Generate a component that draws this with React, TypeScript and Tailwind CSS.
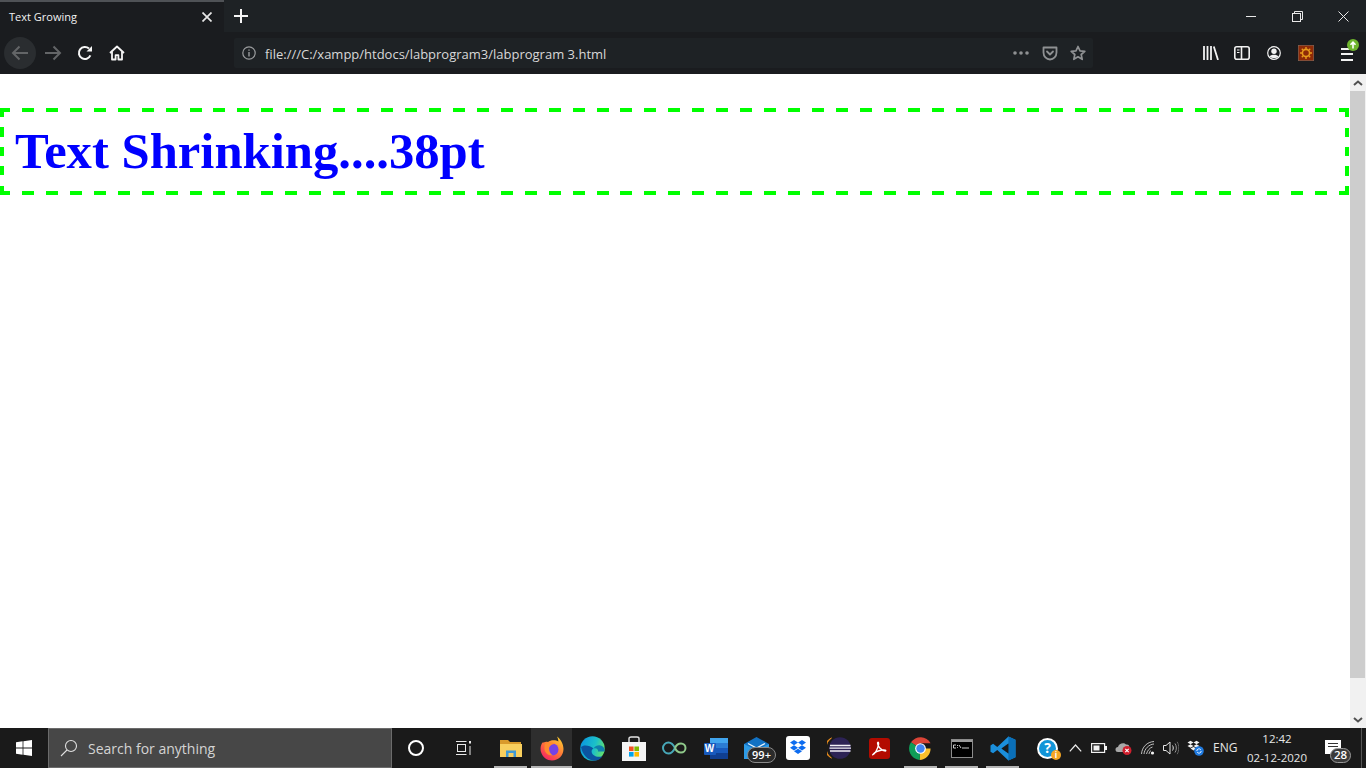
import React from 'react';

const uiFont = "font-['Open_Sans','Noto_Sans',sans-serif]";

function WindowControls() {
  return (
    <div className="ml-auto flex h-8 items-center">
      <div className="flex h-8 w-[46px] items-center justify-center">
        <div className="h-px w-[10px] bg-[#e8e8e8]" />
      </div>
      <div className="flex h-8 w-[46px] items-center justify-center">
        <svg width="11" height="11" viewBox="0 0 11 11" fill="none" stroke="#e8e8e8" strokeWidth="1">
          <rect x="0.5" y="2.5" width="8" height="8" />
          <path d="M2.5 2.5V0.5H10.5V8.5H8.5" />
        </svg>
      </div>
      <div className="flex h-8 w-[46px] items-center justify-center">
        <svg width="11" height="11" viewBox="0 0 11 11" fill="none" stroke="#e8e8e8" strokeWidth="1">
          <path d="M0.5 0.5L10.5 10.5M10.5 0.5L0.5 10.5" />
        </svg>
      </div>
    </div>
  );
}

function TabStrip() {
  return (
    <div className="flex h-8 bg-[#1e2225]">
      <div className="flex h-8 w-[224px] items-center border-t-2 border-[#4f5256] bg-[#1a1c1f] pl-[9px] pr-3">
        <span className={`${uiFont} pt-px text-[11px] text-[#f2f2f2]`}>Text Growing</span>
        <svg className="ml-auto" width="10" height="10" viewBox="0 0 10 10" stroke="#e6e6e6" strokeWidth="1.7">
          <path d="M0.5 0.5L9.5 9.5M9.5 0.5L0.5 9.5" />
        </svg>
      </div>
      <div className="flex h-8 w-[34px] items-center justify-center">
        <svg width="14" height="14" viewBox="0 0 14 14" stroke="#f5f5f5" strokeWidth="2">
          <path d="M7 0V14M0 7H14" />
        </svg>
      </div>
      <WindowControls />
    </div>
  );
}

function NavBar() {
  return (
    <div className="flex h-[42px] items-center bg-[#1a1c1f] pl-1">
      <div className="flex h-8 w-8 items-center justify-center rounded-full bg-[#2a2d30]">
        <svg width="18" height="16" viewBox="0 0 18 16" fill="none" stroke="#636567" strokeWidth="2">
          <path d="M17 8H2M8.5 1.5L2 8L8.5 14.5" />
        </svg>
      </div>
      <div className="flex h-8 w-[34px] items-center justify-center">
        <svg width="18" height="16" viewBox="0 0 18 16" fill="none" stroke="#636567" strokeWidth="2">
          <path d="M1 8H16M9.5 1.5L16 8L9.5 14.5" />
        </svg>
      </div>
      <div className="flex h-8 w-[30px] items-center justify-center">
        <svg width="16" height="16" viewBox="0 0 16 16" fill="none" stroke="#f5f5f5" strokeWidth="2">
          <path d="M13.4 10.4A6 6 0 1 1 12 3.6" />
          <path d="M15 1V6.5H9.5Z" fill="#f5f5f5" stroke="none" />
        </svg>
      </div>
      <div className="flex h-8 w-[34px] items-center justify-center">
        <svg width="16" height="16" viewBox="0 0 16 16" fill="none" stroke="#f5f5f5" strokeWidth="1.8" strokeLinejoin="round">
          <path d="M1 8L8 1.5L15 8" />
          <path d="M3 6.5V14.5H6.6V10.2H9.4V14.5H13V6.5" />
        </svg>
      </div>
      <UrlBar />
      <div className="ml-[110px] flex items-center">
        <ToolbarIcons />
      </div>
    </div>
  );
}

function UrlBar() {
  return (
    <div className="ml-[100px] flex h-[30px] w-[859px] items-center rounded-[2px] bg-[#1e2225] pl-[8px]">
      <svg width="14" height="14" viewBox="0 0 14 14" fill="none" stroke="#9a9c9e" strokeWidth="1.2">
        <circle cx="7" cy="7" r="6.2" />
        <path d="M7 6V10.5M7 3.4V4.8" strokeWidth="1.4" />
      </svg>
      <span className={`${uiFont} ml-[9px] pt-[4px] text-[13px] text-[#d8d8d8]`}>
        file:///C:/xampp/htdocs/labprogram3/labprogram 3.html
      </span>
      <div className="ml-auto flex items-center pr-[7px]">
        <svg width="16" height="4" viewBox="0 0 16 4" fill="#8f9193">
          <circle cx="2" cy="2" r="1.8" />
          <circle cx="8" cy="2" r="1.8" />
          <circle cx="14" cy="2" r="1.8" />
        </svg>
        <svg className="ml-[13px]" width="16" height="15" viewBox="0 0 16 15" fill="none" stroke="#8f9193" strokeWidth="1.8" strokeLinejoin="round" strokeLinecap="round">
          <path d="M1.5 1.5H14.5V6.5A6.5 7 0 0 1 1.5 6.5Z" />
          <path d="M5 5.5L8 8.5L11 5.5" />
        </svg>
        <svg className="ml-[12px]" width="16" height="16" viewBox="0 0 16 16" fill="none" stroke="#8f9193" strokeWidth="1.7" strokeLinejoin="round">
          <path d="M8 1.5L10 5.8L14.8 6.3L11.2 9.5L12.2 14.3L8 11.8L3.8 14.3L4.8 9.5L1.2 6.3L6 5.8Z" />
        </svg>
      </div>
    </div>
  );
}

function ToolbarIcons() {
  return (
    <>
      <svg width="16" height="14" viewBox="0 0 16 14" fill="none" stroke="#f2f2f2" strokeWidth="1.8">
        <path d="M1 0V14M4.5 0V14M8 0V14M10.8 0.5L15 14" />
      </svg>
      <svg className="ml-[15px]" width="16" height="14" viewBox="0 0 16 14" fill="none" stroke="#f2f2f2" strokeWidth="1.6">
        <rect x="0.8" y="0.8" width="14.4" height="12.4" rx="2" />
        <path d="M7.5 1V13" />
        <path d="M3 4H5.5M3 6.5H5.5" strokeWidth="1.2" />
      </svg>
      <svg className="ml-[17px]" width="14" height="14" viewBox="0 0 14 14" fill="none" stroke="#f2f2f2" strokeWidth="1.2">
        <circle cx="7" cy="7" r="6.3" />
        <circle cx="7" cy="5.3" r="2.7" fill="#f2f2f2" stroke="none" />
        <path d="M2.6 10.5C4 8.2 10 8.2 11.4 10.5C10 12.5 4 12.5 2.6 10.5Z" fill="#f2f2f2" stroke="none" />
      </svg>
      <svg className="ml-[17px]" width="16" height="16" viewBox="0 0 16 16">
        <rect width="16" height="16" fill="#8e2a07" stroke="#77706a" strokeWidth="1" />
        <circle cx="8" cy="8" r="3.6" fill="none" stroke="#e89a1c" strokeWidth="1.6" />
        <path d="M8 2V4M8 12V14M2 8H4M12 8H14M3.8 3.8L5.2 5.2M10.8 10.8L12.2 12.2M12.2 3.8L10.8 5.2M5.2 10.8L3.8 12.2" stroke="#e89a1c" strokeWidth="1.4" />
      </svg>
      <div className="relative ml-[27px] flex h-[13px] w-3 translate-y-[1px] flex-col justify-between">
        <div className="h-[2px] w-3 bg-[#f2f2f2]" />
        <div className="h-[2px] w-3 bg-[#f2f2f2]" />
        <div className="h-[2px] w-3 bg-[#f2f2f2]" />
        <svg className="absolute left-[6px] top-[-9px]" width="12" height="12" viewBox="0 0 12 12">
          <circle cx="6" cy="6" r="6" fill="#6fb52e" />
          <path d="M6 9.5V3.5M3.5 5.8L6 3.2L8.5 5.8" fill="none" stroke="#fff" strokeWidth="1.6" />
        </svg>
      </div>
    </>
  );
}

function Page() {
  return (
    <div className="flex min-h-0 flex-1 bg-white">
      <div className="flex-1 pt-[34px]">
        <div className="h-[87px] w-[1349px] bg-no-repeat pl-[15px] pt-[14px] [background-image:repeating-linear-gradient(90deg,#00ff00_0_10px,transparent_10px_21.94px,#00ff00_21.94px_23.94px),repeating-linear-gradient(90deg,#00ff00_0_10px,transparent_10px_21.94px,#00ff00_21.94px_23.94px),repeating-linear-gradient(0deg,#00ff00_0_9px,transparent_9px_19.5px),repeating-linear-gradient(180deg,#00ff00_0_9px,transparent_9px_19.5px)] [background-position:0_0,0_100%,0_0,100%_0] [background-size:100%_4px,100%_4px,4px_100%,4px_100%]">
          <h1 className="font-['Liberation_Serif',serif] text-[50.67px] font-bold leading-[58px] text-[#0000ff]">
            Text Shrinking....38pt
          </h1>
        </div>
      </div>
      <Scrollbar />
    </div>
  );
}

function Scrollbar() {
  return (
    <div className="flex w-4 flex-col bg-[#f1f1f1]">
      <div className="flex h-[17px] items-center justify-center">
        <svg width="10" height="6" viewBox="0 0 10 6" fill="none" stroke="#505050" strokeWidth="2">
          <path d="M1 5L5 1.5L9 5" />
        </svg>
      </div>
      <div className="mr-px h-[587px] bg-[#cdcdcd]" />
      <div className="mt-auto flex h-[17px] items-center justify-center">
        <svg width="10" height="6" viewBox="0 0 10 6" fill="none" stroke="#505050" strokeWidth="2">
          <path d="M1 1L5 4.5L9 1" />
        </svg>
      </div>
    </div>
  );
}

function TaskIcon({ children, running, active }: { children: React.ReactNode; running?: boolean; active?: boolean }) {
  return (
    <div className={`relative flex h-10 w-[41px] items-center justify-center ${active ? 'bg-[#2e2e2e]' : ''}`}>
      {children}
      {running && <div className={`absolute bottom-0 h-[2px] bg-[#b5b5b5] ${active ? 'inset-x-0' : 'inset-x-[4px]'}`} />}
    </div>
  );
}

function Taskbar() {
  return (
    <div className={`${uiFont} flex h-10 items-center bg-[#1a1a1a]`}>
      <div className="flex h-10 w-12 items-center justify-center">
        <svg width="16" height="16" viewBox="0 0 16 16" fill="#fff">
          <path d="M0 2.3L6.6 1.3V7.6H0ZM7.4 1.2L16 0V7.6H7.4ZM0 8.4H6.6V14.7L0 13.7ZM7.4 8.4H16V16L7.4 14.8Z" />
        </svg>
      </div>
      <div className="flex h-10 w-[344px] items-center border border-[#6b6b6b] bg-[#474747] pl-[11px]">
        <svg width="18" height="18" viewBox="0 0 18 18" fill="none" stroke="#e0e0e0" strokeWidth="1.1">
          <circle cx="11" cy="7" r="5.5" />
          <path d="M7 11L1 17" />
        </svg>
        <span className="ml-[10px] text-[14px] text-[#d4d4d4]">Search for anything</span>
      </div>
      <div className="flex h-10 w-12 items-center justify-center">
        <div className="h-4 w-4 rounded-full border-2 border-white" />
      </div>
      <div className="flex h-10 w-12 items-center justify-center">
        <svg width="16" height="16" viewBox="0 0 16 16" fill="none" stroke="#e8e8e8" strokeWidth="1">
          <path d="M0 1.5H10.5M0 14.5H10.5" />
          <rect x="1.5" y="4.5" width="8" height="7" />
          <path d="M14 1V3.5" strokeWidth="2" />
          <path d="M14 6V15" />
        </svg>
      </div>
      <div className="w-[2px]" />
      <TaskIcon running><ExplorerIcon /></TaskIcon>
      <TaskIcon running active><FirefoxIcon /></TaskIcon>
      <TaskIcon><EdgeIcon /></TaskIcon>
      <TaskIcon><StoreIcon /></TaskIcon>
      <TaskIcon><InfinityIcon /></TaskIcon>
      <TaskIcon><WordIcon /></TaskIcon>
      <TaskIcon><MailIcon /></TaskIcon>
      <TaskIcon><DropboxIcon /></TaskIcon>
      <TaskIcon><EclipseIcon /></TaskIcon>
      <TaskIcon><AcrobatIcon /></TaskIcon>
      <TaskIcon running><ChromeIcon /></TaskIcon>
      <TaskIcon running><CmdIcon /></TaskIcon>
      <TaskIcon running><VsCodeIcon /></TaskIcon>
      <Tray />
    </div>
  );
}

function Tray() {
  return (
    <div className="ml-[13px] flex h-10 flex-1 items-center">
      <div className="flex w-[27px] justify-start pl-px"><HelpIcon /></div>
      <div className="flex w-6 justify-center">
        <svg width="13" height="8" viewBox="0 0 13 8" fill="none" stroke="#ececec" strokeWidth="1.2">
          <path d="M0.8 7.3L6.5 1L12.2 7.3" />
        </svg>
      </div>
      <div className="flex w-6 justify-center">
        <svg width="16" height="10" viewBox="0 0 16 10">
          <rect x="0.6" y="0.6" width="13" height="8.8" fill="none" stroke="#f2f2f2" strokeWidth="1.2" />
          <rect x="2.5" y="2.5" width="6" height="5" fill="#f2f2f2" />
          <rect x="14" y="3" width="2" height="4" fill="#f2f2f2" />
        </svg>
      </div>
      <div className="flex w-6 justify-center">
        <svg width="17" height="14" viewBox="0 0 17 14">
          <path d="M3 11A2.5 2.5 0 0 1 3 6C3.5 2.5 9 1 11 3.5C13.5 3 15 5 14 7L10 11Z" fill="#a8a8a8" />
          <circle cx="12" cy="9.5" r="4.5" fill="#d0202e" />
          <path d="M10.3 7.8L13.7 11.2M13.7 7.8L10.3 11.2" stroke="#fff" strokeWidth="1.1" />
        </svg>
      </div>
      <div className="flex w-6 justify-center pl-px">
        <svg width="14" height="14" viewBox="0 0 14 14" fill="none" stroke="#d0d0d0" strokeWidth="0.9">
          <path d="M0.5 13C1 6 6 1 13 0.5" />
          <path d="M3 13C3.3 8 8 3.3 13 3" />
          <path d="M5.5 13C6 10 9 6.5 11.5 6" />
          <path d="M8 13C8.2 11.5 9 10 10 9.5" />
          <circle cx="11.5" cy="12" r="1.6" fill="#f2f2f2" stroke="none" />
        </svg>
      </div>
      <div className="flex w-6 justify-center">
        <svg width="16" height="14" viewBox="0 0 16 14" fill="none" stroke="#e6e6e6" strokeWidth="1">
          <path d="M0.5 4.5H3L7 1V13L3 9.5H0.5Z" />
          <path d="M9.5 4.5C10.5 6 10.5 8 9.5 9.5" />
          <path d="M12 2.5C13.8 5 13.8 9 12 11.5" stroke="#999" />
          <path d="M14.2 0.8C16.3 4.5 16.3 9.5 14.2 13.2" stroke="#666" />
        </svg>
      </div>
      <div className="flex w-6 justify-center">
        <svg width="17" height="16" viewBox="0 0 17 16">
          <path d="M0.5 2.5L3.5 0.8L6.5 2.5L3.5 4.3ZM6.5 2.5L9.5 0.8L12.5 2.5L9.5 4.3ZM0.5 6L3.5 4.3L6.5 6L3.5 7.8ZM6.5 6L9.5 4.3L12.5 6L9.5 7.8ZM3.5 8.6L6.5 7L9.5 8.6L6.5 10.4Z" fill="#f2f2f2" />
          <circle cx="12" cy="11" r="4.8" fill="#1f7ae0" />
          <path d="M9.8 11A2.2 2.2 0 0 1 13.8 9.8M14.2 11A2.2 2.2 0 0 1 10.2 12.2" fill="none" stroke="#fff" strokeWidth="0.9" />
        </svg>
      </div>
      <span className="ml-[6px] w-[27px] text-[12px] text-[#e6e6e6]">ENG</span>
      <div className="ml-[4px] w-[66px] text-center text-[11.5px] leading-[19px] text-[#e6e6e6]">
        <div>12:42</div>
        <div>02-12-2020</div>
      </div>
      <div className="relative ml-[15px] mt-[-3px] h-[14px] w-4 bg-white">
        <div className="mx-[3px] mt-[3px] h-px bg-[#333]" />
        <div className="mx-[3px] mt-[2px] h-px bg-[#333]" />
        <div className="absolute left-[5px] top-[8px] flex h-[15px] w-[21px] items-center justify-center rounded-full border border-[#9a9a9a] bg-[#3a3a3a] text-[11.5px] font-semibold text-white">
          28
        </div>
      </div>
      <div className="ml-auto mr-[4px] h-10 w-px bg-[#555]" />
    </div>
  );
}

function ExplorerIcon() {
  return (
    <svg width="22" height="20" viewBox="0 0 22 20">
      <path d="M0 2H8L10 4H21V7H0Z" fill="#d99a2b" />
      <rect y="6" width="22" height="13" fill="#f8cf5e" />
      <path d="M6 19V12.5H16V19H13.5V15H8.5V19Z" fill="#3f9ad6" />
    </svg>
  );
}

function FirefoxIcon() {
  return (
    <svg width="24" height="25" viewBox="0 0 24 25">
      <defs>
        <linearGradient id="ffa" x1="0.8" y1="0" x2="0.1" y2="1">
          <stop offset="0" stopColor="#ffcf2e" />
          <stop offset="0.5" stopColor="#ff7139" />
          <stop offset="1" stopColor="#f5156c" />
        </linearGradient>
      </defs>
      <path d="M17 0.5C18.5 3 18 4.5 18.5 5.5C16 4 11 3.5 8 6C5 5 3.5 7 2.5 6.5C0 10 0.5 14 1 16C2.5 21 7 24.5 12 24.5C18.5 24.5 23.5 19.5 23.5 13C23.5 8 20.5 3 17 0.5Z" fill="url(#ffa)" />
      <circle cx="12.5" cy="13.5" r="6" fill="#7542e5" />
      <path d="M5 8C8.5 5.5 13 5.5 15 8C12 8 10 9.5 9 12C9 15 10 17.5 13 19.5C8 20 4 16 4.5 12C4.5 10.5 4.5 9 5 8Z" fill="#ff8a2e" />
    </svg>
  );
}

function EdgeIcon() {
  return (
    <svg width="25" height="25" viewBox="0 0 25 25">
      <defs>
        <linearGradient id="ega" x1="0" y1="0.2" x2="1" y2="0.5">
          <stop offset="0" stopColor="#0a96e0" />
          <stop offset="0.6" stopColor="#1cc0c8" />
          <stop offset="1" stopColor="#62e070" />
        </linearGradient>
      </defs>
      <circle cx="12.5" cy="12.5" r="12.2" fill="url(#ega)" />
      <path d="M1 11C2.5 19 8 24.5 14.5 24.7C18.5 24.5 21 22.5 22.5 20C19.5 21.5 16 21 13.5 19C11 17 11 13.5 13.5 12.5C10 9 3 8.5 1 11Z" fill="#0b54a0" />
      <path d="M13.5 12.5C16 11.5 18.5 13 18 15.5H24.5C25 13 24 11 22 10C19 8.5 15.5 9.5 13.5 12.5Z" fill="#0f7fae" />
    </svg>
  );
}

function StoreIcon() {
  return (
    <svg width="24" height="25" viewBox="0 0 24 25">
      <path d="M7 7V2.5C7 1.5 8 1 9 1H15C16 1 17 1.5 17 2.5V7" fill="none" stroke="#e4e4e4" strokeWidth="1.4" />
      <rect y="6" width="24" height="19" fill="#f5f5f5" />
      <rect x="7" y="10.5" width="4.6" height="4.6" fill="#f25022" />
      <rect x="12.4" y="10.5" width="4.6" height="4.6" fill="#7fba00" />
      <rect x="7" y="16" width="4.6" height="4.6" fill="#00a4ef" />
      <rect x="12.4" y="16" width="4.6" height="4.6" fill="#ffb900" />
    </svg>
  );
}

function InfinityIcon() {
  return (
    <svg width="25" height="14" viewBox="0 0 25 14" fill="none" strokeWidth="2">
      <path d="M13 7C11 3 9 1.5 6.5 1.5A5.5 5.5 0 0 0 6.5 12.5C9 12.5 11 11 13 7" stroke="#47a8b8" />
      <path d="M13 7C14.5 3.5 16.5 2.5 19 2.5A4.5 4.5 0 0 1 19 11.5C16.5 11.5 14.5 10.5 13 7" stroke="#8fc98a" />
    </svg>
  );
}

function WordIcon() {
  return (
    <div className="relative h-[21px] w-6">
      <div className="absolute inset-y-0 right-0 flex w-[18px] flex-col">
        <div className="h-[5px] bg-[#41a5ee]" />
        <div className="h-[5px] bg-[#2b7cd3]" />
        <div className="h-[5px] bg-[#185abd]" />
        <div className="h-[6px] bg-[#103f91]" />
      </div>
      <div className="absolute left-0 top-[5px] flex h-[12px] w-3 items-center justify-center rounded-[1px] bg-[#185abd] font-['Liberation_Sans',sans-serif] text-[10px] font-bold text-white">
        W
      </div>
    </div>
  );
}

function MailIcon() {
  return (
    <div className="relative h-[22px] w-[25px]">
      <svg width="25" height="22" viewBox="0 0 25 22">
        <path d="M0 7L12.5 0L25 7V22H0Z" fill="#1272c4" />
        <path d="M0 7L12.5 13L25 7V22H0Z" fill="#2d9be6" />
        <path d="M4 6.5L12.5 11L21 6.5" fill="none" stroke="#e8f4fc" strokeWidth="1.4" />
      </svg>
      <div className="absolute left-[3px] top-[10px] flex h-4 w-[29px] items-center justify-center rounded-full border border-[#8a8a8a] bg-[#2b2b2b] text-[11px] font-semibold text-white">
        99+
      </div>
    </div>
  );
}

function DropboxIcon() {
  return (
    <div className="flex h-6 w-6 items-center justify-center rounded-[3px] bg-white">
      <svg width="18" height="16" viewBox="0 0 18 16" fill="#0d6cf0">
        <path d="M5 0L9 2.6L5 5.2L1 2.6ZM13 0L17 2.6L13 5.2L9 2.6ZM5 5.2L9 7.8L5 10.4L1 7.8ZM13 5.2L17 7.8L13 10.4L9 7.8ZM5 11.3L9 8.7L13 11.3L9 14Z" />
      </svg>
    </div>
  );
}

function EclipseIcon() {
  return (
    <svg width="24" height="22" viewBox="0 0 24 22">
      <circle cx="13" cy="11" r="10.8" fill="#2c2255" />
      <path d="M4.5 1A11 11 0 0 0 4.5 21A12 12 0 0 1 4.5 1Z" fill="#f7941e" stroke="#f7941e" strokeWidth="0.8" />
      <path d="M3 8.5H23.5M2.5 11.2H24M3 14H23.5" stroke="#f2f0f7" strokeWidth="1.3" />
    </svg>
  );
}

function AcrobatIcon() {
  return (
    <div className="flex h-[21px] w-[21px] items-center justify-center rounded-[3px] bg-[#b30b00]">
      <svg width="15" height="15" viewBox="0 0 15 15" fill="none" stroke="#fff" strokeWidth="1.3">
        <path d="M1 13.5C3 13 5.5 8 6.5 4C7 1 6 0.5 5.5 2C5.5 5 9 9.5 13.5 10C14.5 9.5 13 8.5 10 9C7 9.5 3 11 1 13.5Z" />
      </svg>
    </div>
  );
}

function ChromeIcon() {
  return (
    <svg width="23" height="23" viewBox="0 0 24 24">
      <path d="M12 12L2 5.5A12 12 0 0 1 22.5 6.5H12Z" fill="#db4437" />
      <path d="M12 12H22.5A12 12 0 0 1 11 24Z" fill="#fbc02d" />
      <path d="M12 12L11 24A12 12 0 0 1 2 5.5Z" fill="#0f9d58" />
      <circle cx="12" cy="12" r="5.6" fill="#fff" />
      <circle cx="12" cy="12" r="4.4" fill="#4285f4" />
    </svg>
  );
}

function CmdIcon() {
  return (
    <div className="flex h-[19px] w-[22px] flex-col border border-[#8c8c8c] bg-black">
      <div className="h-[2px] bg-[#9a9a9a]" />
      <svg width="20" height="15" viewBox="0 0 20 15" fill="none" stroke="#c9c9c9" strokeWidth="1">
        <path d="M1.5 3H4M1.5 3V6H4M5.5 3V4M5.5 5.2V6M7 3L9 6M10 6H17" />
      </svg>
    </div>
  );
}

function VsCodeIcon() {
  return (
    <svg width="26" height="25" viewBox="0 0 24 24">
      <path d="M17.2 0.5L24 3.5V20.5L17.2 23.5L6.5 13.5L2.5 16.5L0 15V9L2.5 7.5L6.5 10.5Z" fill="#1b8fdc" />
      <path d="M17.2 0.5L24 3.5V20.5L17.2 23.5V16.8L10.5 12L17.2 7.2Z" fill="#0a6fb8" />
      <path d="M17.2 7.2V16.8L10.5 12Z" fill="#1a1a1a" />
    </svg>
  );
}

function HelpIcon() {
  return (
    <div className="relative flex h-[21px] w-[21px] items-center justify-center rounded-full bg-white">
      <div className="flex h-[17px] w-[17px] items-center justify-center rounded-full bg-[#1295d8] text-[14px] font-bold leading-none text-white">
        ?
      </div>
      <div className="absolute bottom-[-1px] right-[-3px] flex h-[10px] w-[10px] items-center justify-center rounded-full bg-[#f5a623] text-[8px] font-bold leading-none text-white">
        i
      </div>
    </div>
  );
}

export default function App() {
  return (
    <div className="flex h-screen flex-col overflow-hidden">
      <TabStrip />
      <NavBar />
      <Page />
      <Taskbar />
    </div>
  );
}
